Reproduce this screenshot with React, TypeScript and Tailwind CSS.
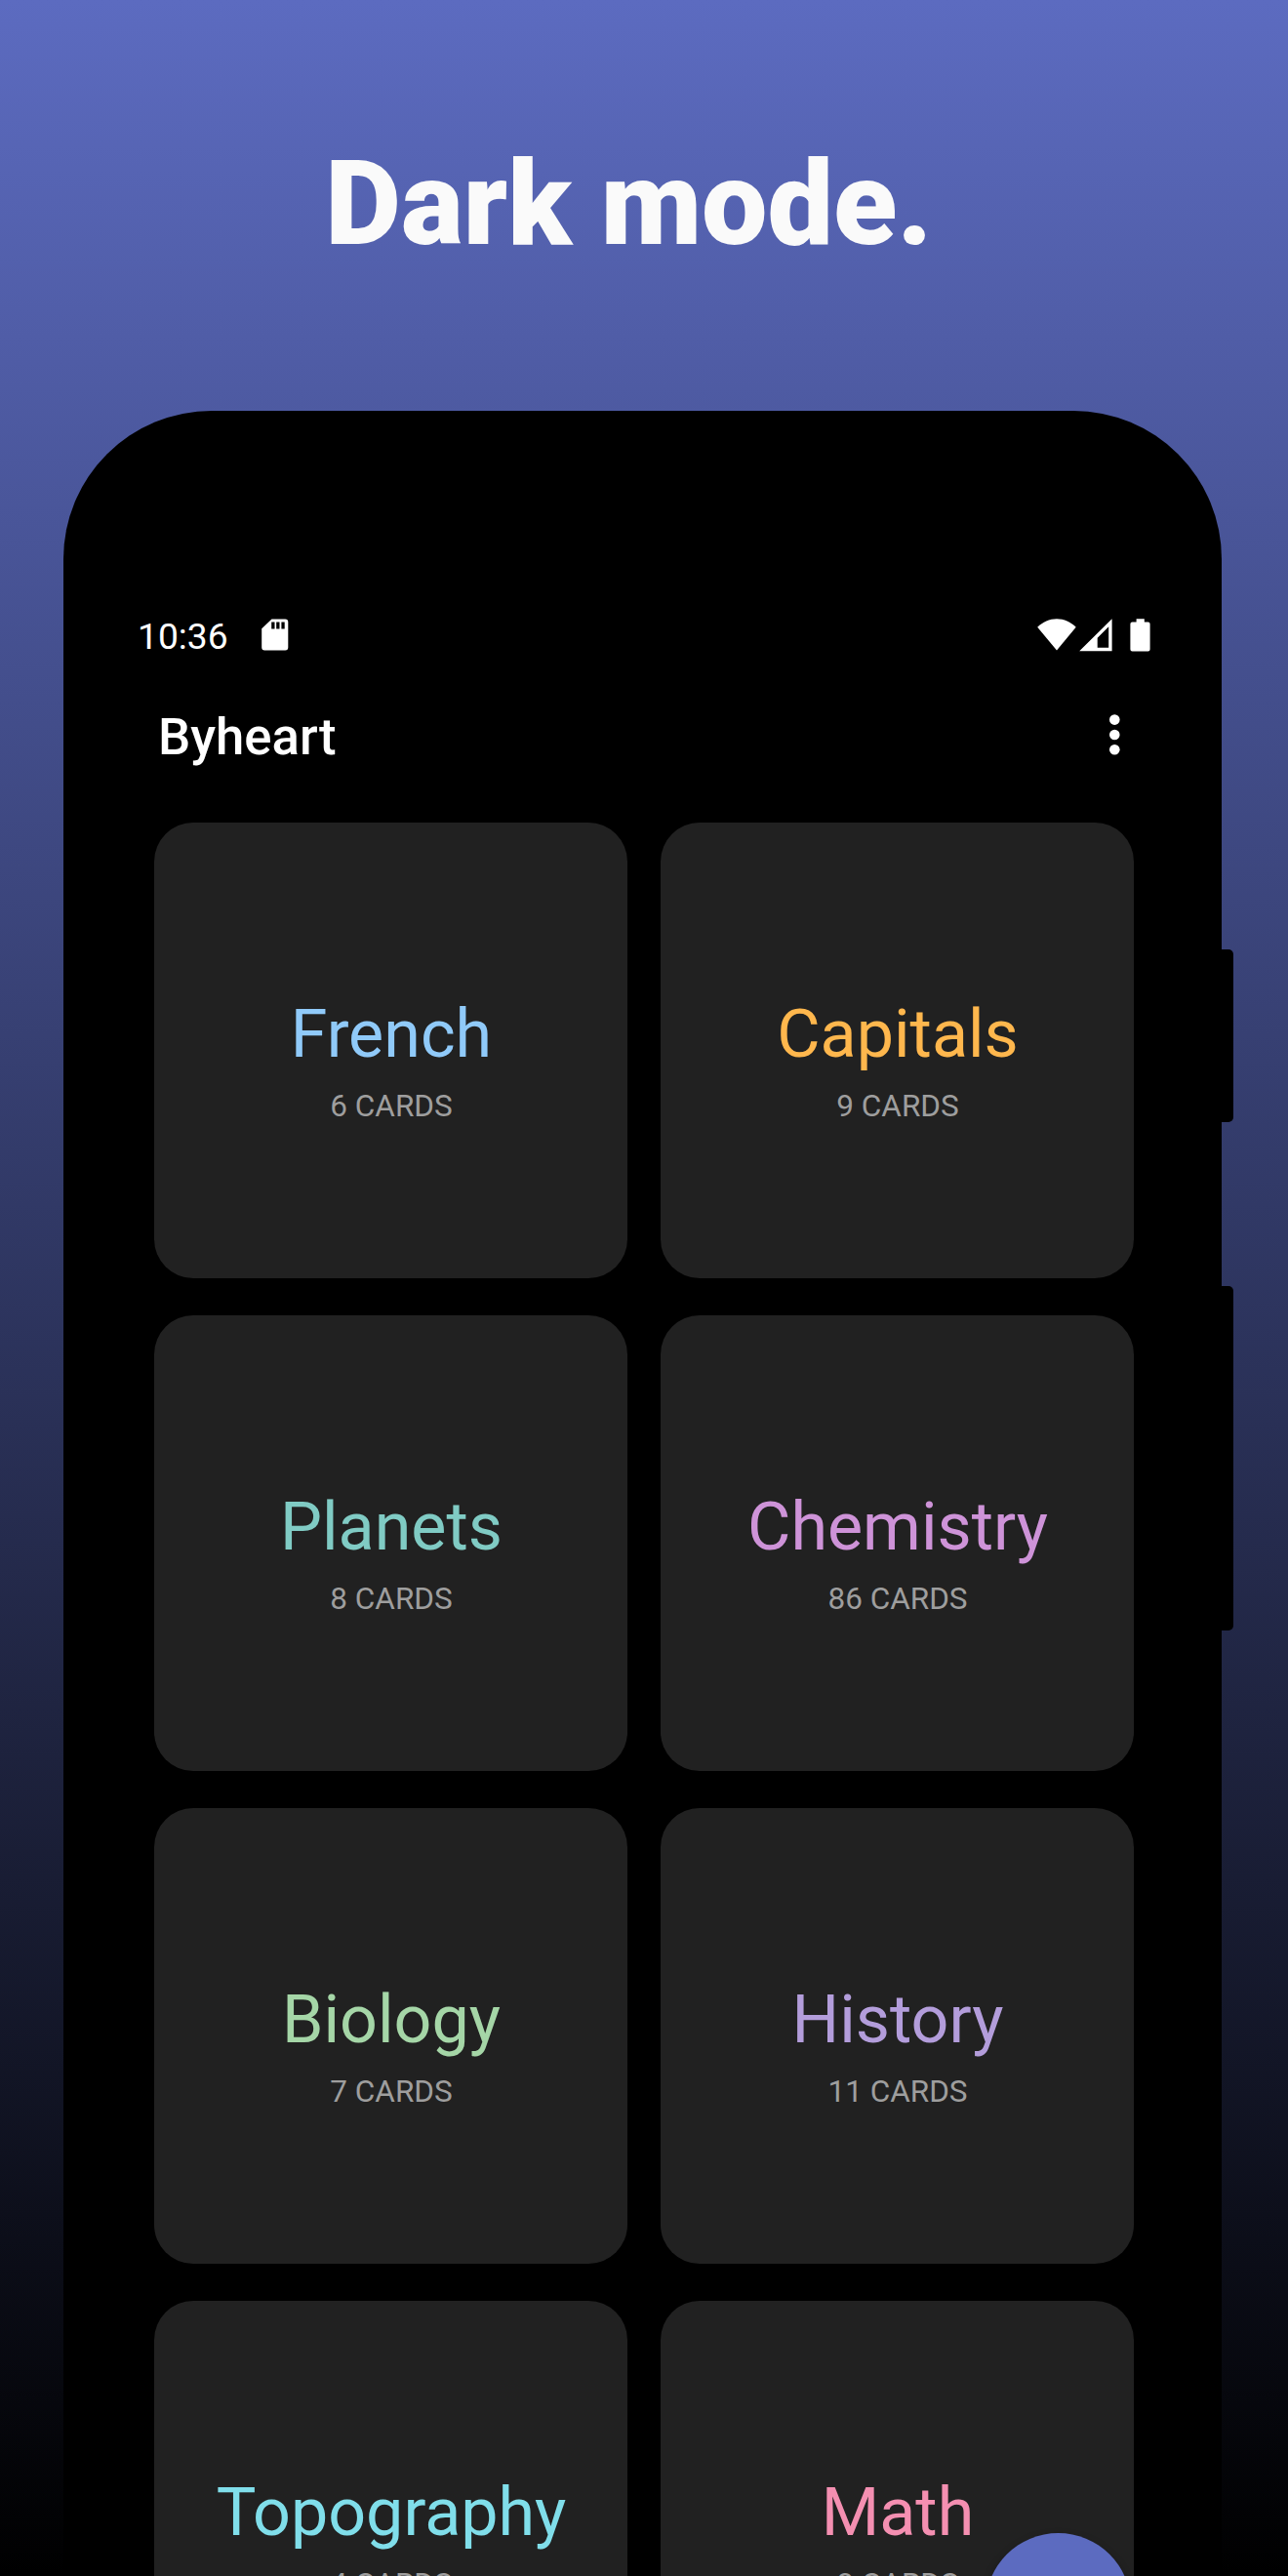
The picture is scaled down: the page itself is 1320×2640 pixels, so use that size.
const decks = [
  { name: "French", count: 6, color: "text-[#90caf9]" },
  { name: "Capitals", count: 9, color: "text-[#ffb74d]" },
  { name: "Planets", count: 8, color: "text-[#80cbc4]" },
  { name: "Chemistry", count: 86, color: "text-[#ce93d8]" },
  { name: "Biology", count: 7, color: "text-[#a5d6a7]" },
  { name: "History", count: 11, color: "text-[#b39ddb]" },
  { name: "Topography", count: 4, color: "text-[#80deea]" },
  { name: "Math", count: 8, color: "text-[#f48fb1]" },
];

function SdCardIcon() {
  return (
    <svg className="h-[33px] w-7" viewBox="0 0 28 33" fill="currentColor" fillRule="evenodd">
      <path d="M10.500 .5H24.300A3 3 0 0 1 27.300 3.500V29.500A3 3 0 0 1 24.300 32.500H3.200A3 3 0 0 1 .2 29.500V10.300ZM10.200 3.500V10.500H13.500V3.500ZM15.200 3.500V10.500H18.500V3.500ZM20.400 3.500V10.500H23.700V3.500Z" />
    </svg>
  );
}

function WifiIcon() {
  return (
    <svg className="h-[34px] w-10" viewBox="0 0 40 34" fill="currentColor">
      <path d="M.2 8.800C5.700 3.200 12.500.2 20 .2S34.300 3.200 39.700 8.800L20 32.600Z" />
    </svg>
  );
}

function SignalIcon() {
  return (
    <svg className="h-[34px] w-[34px]" viewBox="0 0 34 34" fill="currentColor" fillRule="evenodd">
      <path d="M33.600 .2V33.200H.2ZM30.200 8.200L18.700 19.700V29.800H30.200Z" />
    </svg>
  );
}

function BatteryIcon() {
  return (
    <svg className="h-[34px] w-[21px]" viewBox="0 0 21 34" fill="currentColor">
      <path d="M6.600 .2H14.800V3.400H18.600A2 2 0 0 1 20.600 5.400V31.600A2 2 0 0 1 18.600 33.600H2.400A2 2 0 0 1 .4 31.600V5.400A2 2 0 0 1 2.400 3.400H6.600Z" />
    </svg>
  );
}

function StatusBar() {
  return (
    <div className="flex h-10 items-start pr-[73px] pl-[76px] text-white">
      <span className="w-[127px] text-[37.2px] leading-10 whitespace-nowrap">10:36</span>
      <div className="pt-0.5">
        <SdCardIcon />
      </div>
      <div className="ml-auto flex pt-0.5">
        <WifiIcon />
        <div className="ml-[3px]">
          <SignalIcon />
        </div>
        <div className="ml-[18px]">
          <BatteryIcon />
        </div>
      </div>
    </div>
  );
}

function AppBar() {
  return (
    <div className="mt-[53px] flex h-[60px] items-center justify-between pr-[104px] pl-[97px] text-white">
      <span className="text-[52.7px] leading-[60px] font-medium">Byheart</span>
      <svg className="mb-1 h-11 w-3" viewBox="0 0 12 44" fill="currentColor">
        <circle cx="6.300" cy="6.600" r="5.300" />
        <circle cx="6.300" cy="22" r="5.300" />
        <circle cx="6.300" cy="37.300" r="5.300" />
      </svg>
    </div>
  );
}

export default function App() {
  return (
    <div className="relative h-[2640px] w-[1320px] overflow-hidden bg-linear-to-b/srgb from-[#5c6bc0] to-black font-['Roboto',sans-serif]">
      <h1 className="h-[421px] pt-[129px] pr-[31px] text-center text-[120px] leading-[160px] font-black text-[#fafafa]">
        Dark mode.
      </h1>
      <div className="relative ml-[65px] h-[2300px] w-[1187px] rounded-t-[152px] bg-black pt-[211px]">
        <div className="absolute top-[552px] -right-3 h-[177px] w-6 rounded-r-[5px] bg-black" />
        <div className="absolute top-[897px] -right-3 h-[353px] w-6 rounded-r-[5px] bg-black" />
        <StatusBar />
        <AppBar />
        <div className="mt-[58px] ml-[93px] grid w-[1004px] grid-cols-2 gap-x-[34px] gap-y-[38px]">
          {decks.map((deck) => (
            <div key={deck.name} className="flex h-[467px] flex-col items-center rounded-[40px] bg-[#212121] pt-[177px] pl-px">
              <div className={`text-[68.2px] leading-[80px] ${deck.color}`}>{deck.name}</div>
              <div className="mt-[15px] text-[31.5px] leading-[37px] text-[#9e9e9e]">{deck.count} CARDS</div>
            </div>
          ))}
        </div>
        <div className="absolute top-[2175px] right-[93px] h-[149px] w-[149px] rounded-full bg-[#5c6bc0] shadow-[0_4px_8px_rgba(0,0,0,0.35)]" />
      </div>
    </div>
  );
}
